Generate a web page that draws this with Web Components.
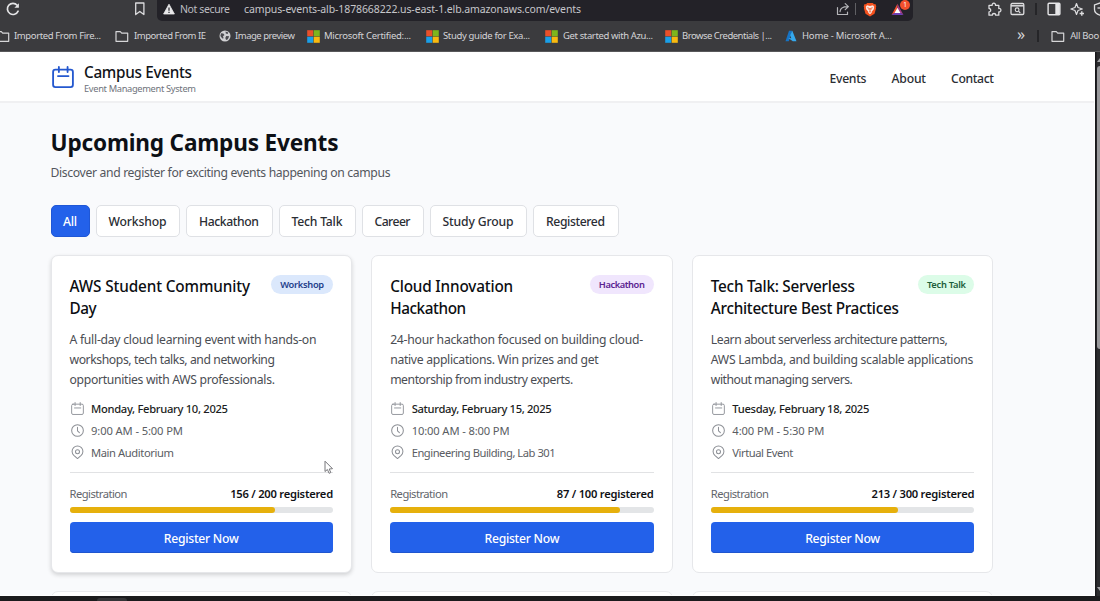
<!DOCTYPE html>
<html lang="en">
<head>
<meta charset="utf-8">
<title>Campus Events</title>
<style>
  html, body { margin: 0; height: 100%; overflow: hidden; }
  body {
    display: flex;
    flex-direction: column;
    position: relative;
    background: #1b1b1d;
    font-family: "Noto Sans", "Open Sans", sans-serif;
    color: #111318;
  }
  .viewport { flex: 1; min-height: 0; display: flex; }
  mouse-cursor { position: absolute; left: 324px; top: 460px; }
</style>
</head>
<body>
<browser-chrome></browser-chrome>
<div class="viewport">
  <events-page></events-page>
  <page-scrollbar></page-scrollbar>
</div>
<task-strip></task-strip>
<mouse-cursor></mouse-cursor>

<script>
const ICONS = {
  calendar: `<svg viewBox="0 0 24 24" fill="none" stroke="currentColor" stroke-width="var(--sw, 1.7)" stroke-linecap="round" stroke-linejoin="round"><rect x="1.2" y="4" width="21.6" height="19" rx="2.5"/><path d="M7.5 1v5.500M17 1v5.500M6.500 11h11.500"/></svg>`,
  clock: `<svg viewBox="0 0 24 24" fill="none" stroke="currentColor" stroke-width="1.9" stroke-linecap="round" stroke-linejoin="round"><circle cx="12" cy="12" r="10.8"/><path d="M12 6v6.5l3.5 3.5"/></svg>`,
  pin: `<svg viewBox="0 0 24 24" fill="none" stroke="currentColor" stroke-width="1.9" stroke-linejoin="round"><path d="M18.8 17.2L12 23.2l-6.8-6A10 10 0 1 1 18.8 17.2z"/><circle cx="12" cy="10.6" r="3.7"/></svg>`,
  reload: `<svg viewBox="0 0 14 14" fill="none" stroke="#e4e4e6" stroke-width="1.7" stroke-linecap="round"><path d="M12.1 9.2A5.6 5.6 0 1 1 11.2 3.2"/><path d="M12.9 1.2v4.6H8.4z" fill="#e4e4e6" stroke="none"/></svg>`,
  bookmark: `<svg viewBox="0 0 12 14" fill="none" stroke="#dcdcde" stroke-width="1.3" stroke-linejoin="round"><path d="M1.7 1h8.2v11.6L5.8 9.4 1.7 12.6z"/></svg>`,
  warning: `<svg viewBox="0 0 12 12"><path d="M6 1.2L11.4 11H.6z" fill="#e8e8ea" stroke="#e8e8ea" stroke-width=".8" stroke-linejoin="round"/><path d="M6 4.4v3.4M6 8.8v1.2" stroke="#232228" stroke-width="1.2"/></svg>`,
  share: `<svg viewBox="0 0 14 14" fill="none" stroke="#b4b4b8" stroke-width="1.2" stroke-linecap="round" stroke-linejoin="round"><path d="M1.5 5.5v7h10V10M4 9.6c.3-3.6 2.6-5 7.6-5M9.2 1.6l3.2 3-3.2 3"/></svg>`,
  brave: `<svg viewBox="0 0 14 15"><path d="M4.2 1h5.6l1.2 1.2 1.4-.1.9 2.2-.4 1.2.2.8-1.6 5.4L7 14.4 2.5 11.7.9 6.3l.2-.8-.4-1.2.9-2.2L3 2.2z" fill="#f4511e"/><path d="M4 3.3l3 .6 3-.6 1.3 1.8-.5.9.2 1.1-2.3 2.7.3.8L7 12.2l-2-1.6.3-.8L3 7.1l.2-1.1-.5-.9z" fill="#fbe9e4"/><path d="M4.300 5.700l1.900.6-.3 1.600M9.700 5.700l-1.900.6.3 1.600M7 6v3.500M5.800 10.300L7 9.500l1.200.8" fill="none" stroke="#f4511e" stroke-width=".8"/></svg>`,
  bat: `<svg viewBox="0 0 14 14"><path d="M7 .8L.6 12.800 7 8.800z" fill="#f4512c"/><path d="M7 .8l6.400 12L7 8.800z" fill="#a33a86"/><path d="M.6 12.800h12.800L7 8.300z" fill="#6d3fb5"/><path d="M7 5l3.200 5.700H3.800z" fill="#fff"/></svg>`,
  puzzle: `<svg viewBox="0 0 15 15" fill="none" stroke="#dedee0" stroke-width="1.3" stroke-linejoin="round"><path d="M2 3.300h3.200a1.700 1.700 0 1 1 3.300 0h3.300v3.200a1.700 1.700 0 1 1 0 3.300v3.400H8.700a1.700 1.700 0 1 0-3.400 0H2V9.900a1.700 1.700 0 1 0 0-3.400z"/></svg>`,
  searchTab: `<svg viewBox="0 0 15 14" fill="none" stroke="#dedee0" stroke-width="1.3"><rect x="1" y="1.500" width="12.800" height="11" rx="1.200"/><path d="M1 3.800h12.800" stroke-width="1.500"/><circle cx="7.100" cy="7.800" r="1.900" stroke-width="1.100"/><path d="M8.500 9.200l1.800 1.800" stroke-width="1.100"/></svg>`,
  sidebar: `<svg viewBox="0 0 14 14"><rect x="1.100" y="1.300" width="11.800" height="11.400" rx="1" fill="none" stroke="#e6e6e8" stroke-width="1.400"/><path d="M8.300 1.300h4.400v11.400H8.300z" fill="#e6e6e8"/></svg>`,
  sparkle: `<svg viewBox="0 0 15 15" fill="none" stroke="#dedee0" stroke-width="1.200" stroke-linejoin="round"><path d="M6.500 1.500l1.500 4 4.300 1.500L8 8.500l-1.500 4-1.500-4L.9 7 5 5.500z"/><path d="M11.800 9.300v4.400M9.600 11.500H14" stroke-width="1.400"/></svg>`,
  shield: `<svg viewBox="0 0 14 14" fill="none" stroke="#dedee0" stroke-width="1.300"><path d="M7 1l5.500 2v4.500c0 2.700-2.500 4.700-5.500 5.700-3-1-5.500-3-5.500-5.700V3z"/><path d="M4.500 6h5"/></svg>`,
  folder: `<svg viewBox="0 0 14 13" fill="none" stroke="#d6d6d8" stroke-width="1.200" stroke-linejoin="round"><path d="M1 11.300V1.600h4.300l1.400 1.600h6v8.100z"/></svg>`,
  globe: `<svg viewBox="0 0 12 12"><circle cx="6" cy="6" r="5.500" fill="#d0d0d3"/><path d="M2 3.200l2.300.2 1.200 1.500-1.500 1.300.6 2-1.300.3L1.400 6zM6.500 1.400l2.900 1.200-.8 1.500-1.800-.6zM7.200 6l3 .3-1.300 2.900-1.800.8-.8-2z" fill="#4b4b50"/></svg>`,
  microsoft: `<svg viewBox="0 0 13 13"><path d="M.2.2h6.100v6.100H.2z" fill="#e8502a"/><path d="M6.700.2h6.100v6.100H6.700z" fill="#7db61c"/><path d="M.2 6.700h6.100v6.100H.2z" fill="#1a9fe8"/><path d="M6.700 6.700h6.100v6.100H6.700z" fill="#f8b90f"/></svg>`,
  azure: `<svg viewBox="0 0 12 12"><path d="M4 .8h3.300L3.800 11.200H.5z" fill="#1673c4"/><path d="M7.300.8L11.500 11.200H7.800L3.300 8l3 .2-1.100-3z" fill="#35a9ee"/></svg>`
};

// Single line of text; "w" tracks the letters out to a fixed advance.
class FitText extends HTMLElement {
  constructor() {
    super();
    this.attachShadow({ mode: "open" }).innerHTML = `
      <style>:host { display: block; white-space: nowrap; flex: none; width: max-content; }</style>
      <slot></slot>`;
  }

  connectedCallback() {
    const target = parseFloat(this.getAttribute("w"));
    const count = this.textContent.length;
    if (!target || count < 2) {
      return;
    }
    const natural = this.getBoundingClientRect().width;
    this.style.letterSpacing = ((target - natural) / (count - 1)).toFixed(3) + "px";
    this.style.width = target + "px";
  }
}

class UiIcon extends HTMLElement {
  constructor() {
    super();
    this.attachShadow({ mode: "open" });
  }

  connectedCallback() {
    const size = this.getAttribute("size") || "14";
    this.shadowRoot.innerHTML = `
      <style>
        :host { display: block; flex: none; width: ${size}px; }
        svg { display: block; width: 100%; height: auto; overflow: visible; }
      </style>${ICONS[this.getAttribute("name")]}`;
  }
}

class BrowserChrome extends HTMLElement {
  connectedCallback() {
    const marks = [
      [-4, "folder", 14, 4, 87, "Imported From Fire..."],
      [14, "folder", 14, 5, 72, "Imported From IE"],
      [13, "globe", 12, 4, 60, "Image preview"],
      [12, "microsoft", 13, 4, 87, "Microsoft Certified:..."],
      [15, "microsoft", 13, 4, 87, "Study guide for Exa..."],
      [15, "microsoft", 13, 5, 90, "Get started with Azu..."],
      [12, "microsoft", 13, 4, 90, "Browse Credentials |..."],
      [13, "azure", 12, 5, 90, "Home - Microsoft A..."]
    ];
    this.attachShadow({ mode: "open" }).innerHTML = `
      <style>
        :host { display: flex; flex-direction: column; flex: none; height: 51px; background: #3b3b3e; color: #d4d4d7; overflow: hidden; border-bottom: 1px solid #58585a; }
        .row { display: flex; align-items: center; }
        .tools { height: 21px; padding-left: 6px; flex: none; }
        .bar { display: flex; align-items: center; flex: none; box-sizing: border-box; width: 756px; height: 21px; margin-left: 11px; padding: 0 0 3px 6px; background: #232228; border-radius: 0 0 5px 5px; font-size: 10.5px; }
        .tools > ui-icon { margin-bottom: 3px; }
        .sep { flex: none; width: 1px; height: 12px; background: #606064; }
        .dark { background: #252528; width: 2px; }
        .bat { position: relative; margin-left: 14px; }
        .bat i { position: absolute; left: 9px; top: -3px; width: 10px; height: 10px; border-radius: 5px; background: #f3502c; color: #fff; font: 6.5px/10px "Noto Sans", sans-serif; text-align: center; }
        .marks { height: 30px; font-size: 9.5px; line-height: 14px; }
        .mark { display: flex; align-items: center; flex: none; }
      </style>
      <div class="row tools">
        <ui-icon name="reload" size="14"></ui-icon>
        <ui-icon name="bookmark" size="12" style="margin-left:114px"></ui-icon>
        <div class="bar">
          <ui-icon name="warning" size="12"></ui-icon>
          <fit-text w="50" style="margin-left:5px;color:#bcbcc0">Not secure</fit-text>
          <fit-text w="337" style="margin-left:14px;color:#c6c6ca">campus-events-alb-1878668222.us-east-1.elb.amazonaws.com/events</fit-text>
          <ui-icon name="share" size="14" style="margin-left:255px"></ui-icon>
          <span class="sep" style="margin-left:5px"></span>
          <ui-icon name="brave" size="14" style="margin-left:7px"></ui-icon>
          <span class="bat"><ui-icon name="bat" size="13"></ui-icon><i>1</i></span>
        </div>
        <ui-icon name="puzzle" size="15" style="margin-left:74px"></ui-icon>
        <ui-icon name="searchTab" size="15" style="margin-left:8px"></ui-icon>
        <span class="sep dark" style="margin-left:10px;margin-bottom:3px"></span>
        <ui-icon name="sidebar" size="14" style="margin-left:10px"></ui-icon>
        <ui-icon name="sparkle" size="15" style="margin-left:9px"></ui-icon>
        <ui-icon name="shield" size="14" style="margin-left:8px"></ui-icon>
      </div>
      <div class="row marks">
        ${marks.map(([left, icon, size, gap, w, label]) => `
          <div class="mark" style="margin-left:${left}px">
            <ui-icon name="${icon}" size="${size}"></ui-icon>
            <fit-text w="${w}" style="margin-left:${gap}px">${label}</fit-text>
          </div>`).join("")}
        <fit-text style="margin-left:125px;font-size:16px;margin-top:-4px">»</fit-text>
        <span class="sep dark" style="margin-left:12px"></span>
        <ui-icon name="folder" size="14" style="margin-left:12px"></ui-icon>
        <fit-text w="29" style="margin-left:5px">All Boo</fit-text>
      </div>`;
  }
}

class SiteHeader extends HTMLElement {
  connectedCallback() {
    this.attachShadow({ mode: "open" }).innerHTML = `
      <style>
        :host { display: flex; align-items: center; flex: none; box-sizing: border-box; height: 51px; padding: 0 100px 0 52px; background: #fff; border-bottom: 2px solid #f0f0f2; }
        ui-icon { color: #2458cf; --sw: 2; }
        .brand { margin-left: 10px; padding-top: 5px; flex: 1; }
        .name { font-size: 15.3px; font-weight: 500; line-height: 19px; }
        .tag { font-size: 9.3px; line-height: 13px; color: #6f737b; }
        nav { display: flex; gap: 25px; padding-top: 4px; font-size: 12.2px; font-weight: 500; line-height: 18px; color: #2a2d33; }
      </style>
      <ui-icon name="calendar" size="22"></ui-icon>
      <div class="brand">
        <fit-text class="name" w="108">Campus Events</fit-text>
        <fit-text class="tag" w="112">Event Management System</fit-text>
      </div>
      <nav>
        <fit-text w="37">Events</fit-text>
        <fit-text w="34.5">About</fit-text>
        <fit-text w="43">Contact</fit-text>
      </nav>`;
  }
}

class FilterChip extends HTMLElement {
  connectedCallback() {
    this.attachShadow({ mode: "open" }).innerHTML = `
      <style>
        :host { display: flex; align-items: center; justify-content: center; flex: none; box-sizing: border-box; height: 32.5px; padding-top: 1px; border: 1px solid #dfe1e5; border-radius: 5px; background: #fff; font-size: 12.2px; font-weight: 500; color: #2b2e34; }
        :host([active]) { background: #2361ea; border-color: #1f57d6; color: #fff; }
      </style>
      <slot></slot>`;
  }
}

class EventCard extends HTMLElement {
  connectedCallback() {
    const d = this.data;
    if (!d) {
      return;
    }
    const line = ([w, text]) => `<fit-text w="${w}">${text}</fit-text>`;
    this.attachShadow({ mode: "open" }).innerHTML = `
      <style>
        :host { display: block; box-sizing: border-box; height: 318px; padding: 19px 18px 18px; border: 1px solid #e6e7ea; border-radius: 7px; background: #fff; }
        :host([raised]) { box-shadow: 0 2px 4px rgba(0, 0, 0, .16); }
        .head { display: flex; justify-content: space-between; height: 44px; }
        .title { font-size: 15.3px; font-weight: 500; line-height: 22px; color: #0c0e12; }
        .badge { display: flex; justify-content: center; box-sizing: border-box; height: 19px; margin-left: -20px; border-radius: 10px; font-size: 9.3px; font-weight: 600; line-height: 19px; }
        .desc { margin-top: 10.5px; font-size: 12.2px; line-height: 20.2px; color: #4a4d53; }
        .meta { display: grid; gap: 6px; margin-top: 10.5px; font-size: 11.2px; line-height: 16px; color: #5a5d63; }
        .meta div { display: flex; align-items: center; gap: 7.5px; }
        .meta ui-icon { color: #8d9096; margin-left: 1px; }
        .meta .date { font-weight: 500; color: #1b1d22; }
        .stat { display: flex; justify-content: space-between; margin-top: 11px; padding-top: 13px; border-top: 1px solid #e1e2e4; font-size: 11.2px; line-height: 16px; color: #62656b; }
        .stat .count { font-weight: 600; color: #0f1115; }
        .track { height: 6px; margin-top: 5px; border-radius: 3px; background: #e3e5e7; }
        .fill { height: 100%; border-radius: 3px; background: #e6b00c; }
        .action { display: flex; align-items: center; justify-content: center; box-sizing: border-box; height: 31px; margin-top: 9px; padding-top: 3px; border-radius: 4px; background: #2361ea; box-shadow: inset 0 -1px #1f55cf; color: #fff; font-size: 12.2px; font-weight: 500; }
      </style>
      <div class="head">
        <div class="title">${d.title.map(line).join("")}</div>
        <div class="badge" style="width:${d.badge[0]}px;background:${d.badge[3]};color:${d.badge[4]}">${line([d.badge[1], d.badge[2]])}</div>
      </div>
      <div class="desc">${d.desc.map(line).join("")}</div>
      <div class="meta">
        <div class="date"><ui-icon name="calendar" size="13"></ui-icon>${line(d.date)}</div>
        <div><ui-icon name="clock" size="13"></ui-icon>${line(d.time)}</div>
        <div><ui-icon name="pin" size="13"></ui-icon>${line(d.place)}</div>
      </div>
      <div class="stat">${line([58, "Registration"])}<fit-text class="count" w="${d.count[0]}">${d.count[1]}</fit-text></div>
      <div class="track"><div class="fill" style="width:${d.fill}%"></div></div>
      <div class="action">${line([75, "Register Now"])}</div>`;
  }
}

const EVENTS = [
  {
    title: [[180.5, "AWS Student Community"], [27, "Day"]],
    badge: [62, 44, "Workshop", "#dbe8fc", "#25418c"],
    desc: [[247, "A full-day cloud learning event with hands-on"], [205.5, "workshops, tech talks, and networking"], [205.5, "opportunities with AWS professionals."]],
    date: [137, "Monday, February 10, 2025"],
    time: [92, "9:00 AM - 5:00 PM"],
    place: [83, "Main Auditorium"],
    count: [103, "156 / 200 registered"],
    fill: 78
  },
  {
    title: [[123, "Cloud Innovation"], [76, "Hackathon"]],
    badge: [64, 46, "Hackathon", "#f0e6fd", "#5b2391"],
    desc: [[253, "24-hour hackathon focused on building cloud-"], [208.5, "native applications. Win prizes and get"], [183, "mentorship from industry experts."]],
    date: [140, "Saturday, February 15, 2025"],
    time: [98, "10:00 AM - 8:00 PM"],
    place: [144, "Engineering Building, Lab 301"],
    count: [97, "87 / 100 registered"],
    fill: 87
  },
  {
    title: [[144, "Tech Talk: Serverless"], [188, "Architecture Best Practices"]],
    badge: [56, 39, "Tech Talk", "#dcfce8", "#1c5f3c"],
    desc: [[237, "Learn about serverless architecture patterns,"], [262.5, "AWS Lambda, and building scalable applications"], [142, "without managing servers."]],
    date: [137, "Tuesday, February 18, 2025"],
    time: [92, "4:00 PM - 5:30 PM"],
    place: [61, "Virtual Event"],
    count: [103, "213 / 300 registered"],
    fill: 71
  }
];

class EventsPage extends HTMLElement {
  connectedCallback() {
    const chips = [[39, 14, "All"], [84, 58, "Workshop"], [87, 60, "Hackathon"], [77, 51, "Tech Talk"], [62, 36, "Career"], [97, 71, "Study Group"], [86, 59, "Registered"]];
    const root = this.attachShadow({ mode: "open" });
    root.innerHTML = `
      <style>
        :host { display: flex; flex-direction: column; flex: none; box-sizing: border-box; width: 1095px; overflow: hidden; background: #f9fafc; border-right: 1px solid #fff; border-bottom: 1px solid #fff; }
        main { padding: 25px 100.5px 0 50.5px; }
        .h1 { font-size: 22.6px; font-weight: 700; line-height: 30px; color: #0d1016; }
        .sub { margin-top: 5.5px; font-size: 12.2px; line-height: 18px; color: #53565c; }
        .filters { display: flex; gap: 6px; margin-top: 23px; }
        .grid { display: grid; grid-template-columns: repeat(3, 1fr); gap: 18px 19px; margin-top: 18px; }
      </style>
      <site-header></site-header>
      <main>
        <fit-text class="h1" w="288">Upcoming Campus Events</fit-text>
        <fit-text class="sub" w="340">Discover and register for exciting events happening on campus</fit-text>
        <div class="filters">
          ${chips.map(([width, w, label], i) => `<filter-chip style="width:${width}px"${i ? "" : " active"}><fit-text w="${w}">${label}</fit-text></filter-chip>`).join("")}
        </div>
        <div class="grid"></div>
      </main>`;
    const grid = root.querySelector(".grid");
    EVENTS.forEach((event, i) => {
      const card = document.createElement("event-card");
      card.data = event;
      card.toggleAttribute("raised", i === 0);
      grid.append(card);
    });
    // only the top edge of the next row is in view
    for (let i = 0; i < 3; i++) {
      grid.append(document.createElement("card-edge"));
    }
  }
}

class CardEdge extends HTMLElement {
  constructor() {
    super();
    this.attachShadow({ mode: "open" }).innerHTML = `
      <style>:host { display: block; height: 40px; border: 1px solid #e9eaed; border-radius: 7px; background: #fff; }</style>`;
  }
}

class PageScrollbar extends HTMLElement {
  constructor() {
    super();
    this.attachShadow({ mode: "open" }).innerHTML = `
      <style>
        :host { display: flex; flex-direction: column; justify-content: space-between; flex: 1; min-width: 0; padding-left: 2px; background: linear-gradient(90deg, #17171a 1px, #2b2b2e 2px); overflow: hidden; }
        svg { display: block; width: 8px; height: 6px; margin: 4px 0; flex: none; }
        .bar { flex: 1; }
        .thumb { height: 283px; border-radius: 4px 0 0 4px; background: #98989b; }
        .end { margin: 0 0 3px; }
      </style>
      <svg viewBox="0 0 8 6"><path d="M4.500 0L9 6H0z" fill="#a5a5a8"/></svg>
      <div class="bar"><div class="thumb"></div></div>
      <svg class="end" viewBox="0 0 8 6"><path d="M0 0h9L4.500 6z" fill="#a5a5a8"/></svg>`;
  }
}

class TaskStrip extends HTMLElement {
  constructor() {
    super();
    this.attachShadow({ mode: "open" }).innerHTML = `
      <style>
        :host { display: flex; align-items: flex-end; flex: none; height: 5px; padding-left: 97px; background: #1b1b1d; }
        span { width: 30px; height: 3px; border-radius: 3px 3px 0 0; background: #343437; }
      </style>
      <span></span>`;
  }
}

class MouseCursor extends HTMLElement {
  constructor() {
    super();
    this.attachShadow({ mode: "open" }).innerHTML = `
      <style>:host { display: block; width: 10px; height: 15px; } svg { display: block; }</style>
      <svg width="10" height="15" viewBox="0 0 10 15"><path d="M1 1.200v10.300l2.400-2 1.700 3.800 1.700-.8-1.600-3.500 3.300-.3z" fill="#fff" stroke="#77777b" stroke-width="1" stroke-linejoin="round"/></svg>`;
  }
}

customElements.define("fit-text", FitText);
customElements.define("ui-icon", UiIcon);
customElements.define("filter-chip", FilterChip);
customElements.define("event-card", EventCard);
customElements.define("card-edge", CardEdge);
customElements.define("site-header", SiteHeader);
customElements.define("browser-chrome", BrowserChrome);
customElements.define("events-page", EventsPage);
customElements.define("page-scrollbar", PageScrollbar);
customElements.define("task-strip", TaskStrip);
customElements.define("mouse-cursor", MouseCursor);
</script>
</body>
</html>
